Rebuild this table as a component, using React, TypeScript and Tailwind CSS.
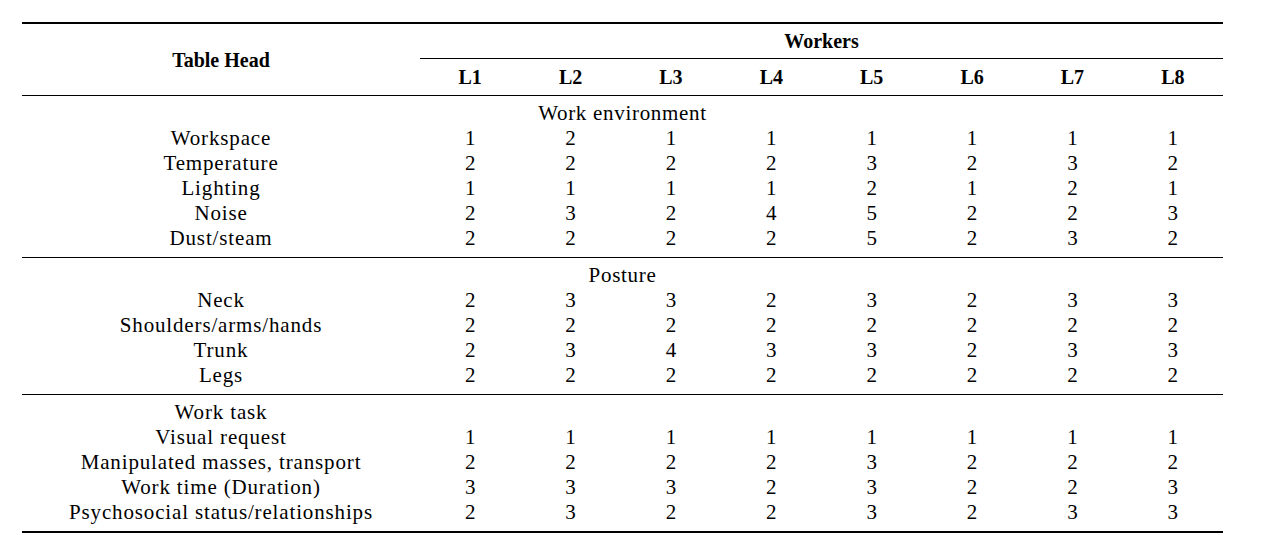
const cols = "grid grid-cols-[398px_repeat(8,minmax(0,1fr))]";

const sections = [
  {
    title: "Work environment",
    wide: true,
    rows: [
      { label: "Workspace", values: [1, 2, 1, 1, 1, 1, 1, 1] },
      { label: "Temperature", values: [2, 2, 2, 2, 3, 2, 3, 2] },
      { label: "Lighting", values: [1, 1, 1, 1, 2, 1, 2, 1] },
      { label: "Noise", values: [2, 3, 2, 4, 5, 2, 2, 3] },
      { label: "Dust/steam", values: [2, 2, 2, 2, 5, 2, 3, 2] },
    ],
  },
  {
    title: "Posture",
    wide: true,
    rows: [
      { label: "Neck", values: [2, 3, 3, 2, 3, 2, 3, 3] },
      { label: "Shoulders/arms/hands", values: [2, 2, 2, 2, 2, 2, 2, 2] },
      { label: "Trunk", values: [2, 3, 4, 3, 3, 2, 3, 3] },
      { label: "Legs", values: [2, 2, 2, 2, 2, 2, 2, 2] },
    ],
  },
  {
    title: "Work task",
    wide: false,
    rows: [
      { label: "Visual request", values: [1, 1, 1, 1, 1, 1, 1, 1] },
      { label: "Manipulated masses, transport", values: [2, 2, 2, 2, 3, 2, 2, 2] },
      { label: "Work time (Duration)", values: [3, 3, 3, 2, 3, 2, 2, 3] },
      { label: "Psychosocial status/relationships", values: [2, 3, 2, 2, 3, 2, 3, 3] },
    ],
  },
];

const workers = ["L1", "L2", "L3", "L4", "L5", "L6", "L7", "L8"];

export default function App() {
  return (
    <div className="min-h-screen bg-white pt-[22px] font-['Liberation_Serif',serif] text-black">
      <div className="ml-[22px] w-[1201px] border-t-2 border-b-2 border-black">
        {/* header */}
        <div className={`${cols} grid-rows-[35px_36px] border-b border-black`}>
          <div className="row-span-2 flex items-center justify-center text-[20px] font-bold">Table Head</div>
          <div className="col-span-8 flex items-center justify-center border-b border-black text-[20px] font-bold">
            Workers
          </div>
          {workers.map((w) => (
            <div key={w} className="flex items-center justify-center text-[20px] font-bold">
              {w}
            </div>
          ))}
        </div>

        {sections.map((s, i) => (
          <div key={s.title} className={`pt-[5px] pb-[6px] ${i > 0 ? "border-t border-black" : ""}`}>
            {s.wide ? (
              <div className="h-[25px] text-center text-[21px] leading-[25px] tracking-[0.7px]">{s.title}</div>
            ) : (
              <div className={`${cols} h-[25px] text-[21px] leading-[25px]`}>
                <div className="text-center tracking-[0.85px]">{s.title}</div>
              </div>
            )}
            {s.rows.map((r) => (
              <div key={r.label} className={`${cols} h-[25px] text-[21px] leading-[25px]`}>
                <div className="text-center tracking-[0.85px] whitespace-nowrap">{r.label}</div>
                {r.values.map((v, j) => (
                  <div key={j} className="text-center">
                    {v}
                  </div>
                ))}
              </div>
            ))}
          </div>
        ))}
      </div>
    </div>
  );
}
